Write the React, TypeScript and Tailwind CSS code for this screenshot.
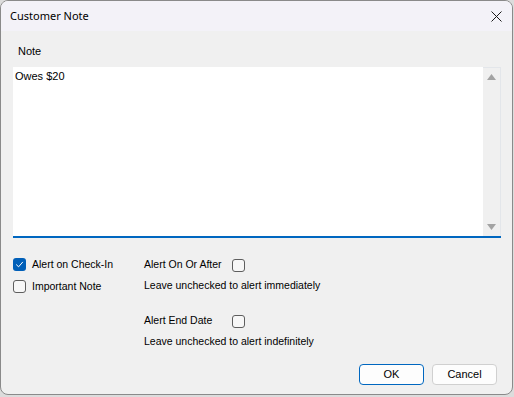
import React from "react";

const BODY = { fontFamily: '"Liberation Sans", Arial, sans-serif' };
const TITLE = { fontFamily: '"Noto Sans", "Liberation Sans", sans-serif' };

function Box({ checked = false }: { checked?: boolean }) {
  if (checked) {
    return (
      <span className="flex h-[13px] w-[13px] shrink-0 items-center justify-center rounded-[3px] bg-[#005fb8]">
        <svg width="9" height="9" viewBox="0 0 9 9" fill="none">
          <path d="M1.5 4.8 L3.6 6.8 L7.6 2.2" stroke="#fff" strokeWidth="1" strokeLinecap="round" strokeLinejoin="round" />
        </svg>
      </span>
    );
  }
  return <span className="block h-[13px] w-[13px] shrink-0 rounded-[3px] border border-[#5e5e5e] bg-[#f7f7f7]" />;
}

export default function App() {
  return (
    <div className="h-[397px] w-[514px] overflow-hidden bg-[#dcdcdc] text-[11px] text-black" style={BODY}>
      <div className="flex h-[395px] w-[513px] flex-col overflow-hidden rounded-[8px] border border-[#8a8a8a] bg-[#f0f0f0]">
        {/* title bar */}
        <div className="flex h-[30px] shrink-0 items-center justify-between bg-[#f3f2f8] pl-[9px] pr-[9px]">
          <span className="text-[11px]" style={TITLE}>
            Customer Note
          </span>
          <svg width="11" height="11" viewBox="0 0 11 11" className="mr-[1px]">
            <path d="M0.5 0.5 L10.5 10.5 M10.5 0.5 L0.5 10.5" stroke="#1a1a1a" strokeWidth="1" />
          </svg>
        </div>

        <div className="flex flex-1 flex-col px-[12px]">
          <div className="pl-[5px] pt-[12px] leading-[16px]">Note</div>

          {/* note text box */}
          <div className="mt-[8px] flex h-[171px] w-[488px] border-b-2 border-[#0067c0] bg-white">
            <div className="flex-1 pl-[2px] pt-[1px] leading-[16px]">Owes $20</div>
            <div className="flex w-[18px] flex-col items-center justify-between border-r border-t border-[#e3e6ea] bg-[#f0f0f0] py-[6px]">
              <svg width="9" height="6" viewBox="0 0 9 6">
                <path d="M0 6 L4.5 0 L9 6 Z" fill="#a3a3a3" />
              </svg>
              <svg width="9" height="6" viewBox="0 0 9 6">
                <path d="M0 0 L9 0 L4.5 6 Z" fill="#a3a3a3" />
              </svg>
            </div>
          </div>

          {/* options */}
          <div className="mt-[20px] flex text-[10.5px]">
            <div className="flex w-[131px] flex-col gap-[9px]">
              <label className="flex h-[13px] items-center gap-[6px]">
                <Box checked />
                <span>Alert on Check-In</span>
              </label>
              <label className="flex h-[13px] items-center gap-[6px]">
                <Box />
                <span>Important Note</span>
              </label>
            </div>
            <div className="flex flex-col">
              <div className="flex h-[14px] items-center">
                <span className="w-[88px] whitespace-nowrap">Alert On Or After</span>
                <Box />
              </div>
              <div className="mt-[6px] leading-[14px] whitespace-nowrap">Leave unchecked to alert immediately</div>
              <div className="mt-[22px] flex h-[14px] items-center">
                <span className="w-[88px] whitespace-nowrap">Alert End Date</span>
                <Box />
              </div>
              <div className="mt-[6px] leading-[14px] whitespace-nowrap">Leave unchecked to alert indefinitely</div>
            </div>
          </div>

          {/* buttons */}
          <div className="mt-auto mb-[9px] flex justify-end gap-[8px] pr-[3px]">
            <button className="h-[21px] w-[65px] rounded-[4px] border border-[#0067c0] bg-[#fdfdfd] text-[11px] leading-none">
              OK
            </button>
            <button className="h-[21px] w-[65px] rounded-[4px] border border-[#d0d0d0] bg-[#fdfdfd] text-[11px] leading-none">
              Cancel
            </button>
          </div>
        </div>
      </div>
    </div>
  );
}
